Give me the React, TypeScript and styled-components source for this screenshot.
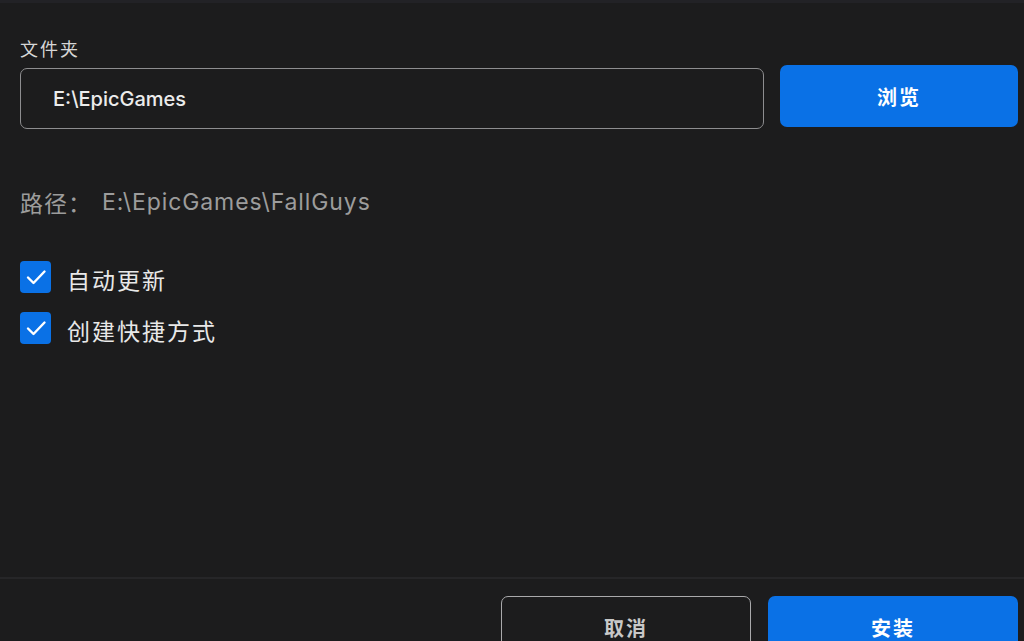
import React from 'react';
import styled, { createGlobalStyle } from 'styled-components';

const GlobalStyle = createGlobalStyle`
  html, body {
    margin: 0;
    padding: 0;
    background: #1c1c1d;
    font-family: Inter, "Noto Sans CJK SC", sans-serif;
  }
`;

const Dialog = styled.div`
  width: 1024px;
  height: 641px;
  display: flex;
  flex-direction: column;
  background: #1c1c1d;
  border-top: 3px solid #222226;
  box-sizing: border-box;
  overflow: hidden;
`;

const Body = styled.div`
  flex: 1;
  min-height: 0;
  padding: 33px 6px 0 20px;
  display: flex;
  flex-direction: column;
`;

const FieldLabel = styled.div`
  font-family: "Noto Sans CJK SC", sans-serif;
  font-size: 18px;
  line-height: 24px;
  letter-spacing: 2px;
  color: #d6d6d6;
  margin-bottom: 8px;
`;

const FolderRow = styled.div`
  display: flex;
  align-items: flex-start;
  gap: 16px;
`;

const PathInput = styled.div`
  flex: 1;
  height: 61px;
  box-sizing: border-box;
  border: 1.5px solid #8d8d8f;
  border-radius: 7px;
  display: flex;
  align-items: center;
  padding-left: 32px;
  font-size: 20px;
  font-weight: 500;
  color: #ececec;
`;

const Button = styled.button<{ $primary?: boolean; $wide?: boolean }>`
  width: ${p => (p.$wide ? '250px' : '238px')};
  height: 62px;
  flex-shrink: 0;
  box-sizing: border-box;
  border-radius: 7px;
  border: ${p => (p.$primary ? 'none' : '1.5px solid #a9a9ab')};
  background: ${p => (p.$primary ? '#0a71e6' : 'transparent')};
  color: ${p => (p.$primary ? '#ffffff' : '#c8c8c8')};
  font-family: "Noto Sans CJK SC", sans-serif;
  font-size: 20px;
  font-weight: 700;
  letter-spacing: 2px;
  padding: 0;
  cursor: pointer;
`;

const BrowseButton = styled(Button)`
  margin-top: -3px;
`;

const PathLine = styled.div`
  margin-top: 58px;
  display: flex;
  align-items: center;
  gap: 10px;
  font-size: 23px;
  line-height: 30px;
  color: #9c9c9c;
  white-space: nowrap;
`;

const PathLabel = styled.span`
  font-family: "Noto Sans CJK SC", sans-serif;
  letter-spacing: 1px;
`;

const PathValue = styled.span`
  letter-spacing: 0.9px;
`;

const Options = styled.div`
  margin-top: 44px;
  display: flex;
  flex-direction: column;
  gap: 19px;
`;

const OptionRow = styled.label`
  height: 32px;
  display: flex;
  align-items: center;
  gap: 16px;
  font-family: "Noto Sans CJK SC", sans-serif;
  font-size: 23px;
  letter-spacing: 2px;
  color: #e8e8e8;
`;

const Box = styled.span`
  width: 31px;
  height: 32px;
  border-radius: 4px;
  background: #0a71e6;
  display: flex;
  align-items: center;
  justify-content: center;
  flex-shrink: 0;
`;

const OptionText = styled.span`
  margin-top: 4px;
`;

const Footer = styled.div`
  flex-shrink: 0;
  height: 64px;
  box-sizing: border-box;
  border-top: 2px solid #262628;
  padding: 17px 6px 0 0;
  display: flex;
  align-items: flex-start;
  justify-content: flex-end;
  gap: 17px;
  overflow: hidden;
`;

const Check = () => (
  <svg width="24" height="24" viewBox="0 0 24 24" fill="none">
    <path d="M4 12.5 L9.5 18 L20.5 6.5" stroke="#ffffff" strokeWidth="2.4" strokeLinecap="round" strokeLinejoin="round" />
  </svg>
);

const Option: React.FC<{ text: string }> = ({ text }) => (
  <OptionRow>
    <Box>
      <Check />
    </Box>
    <OptionText>{text}</OptionText>
  </OptionRow>
);

const App: React.FC = () => {
  return (
    <>
      <GlobalStyle />
      <Dialog>
        <Body>
          <FieldLabel>文件夹</FieldLabel>
          <FolderRow>
            <PathInput>E:\EpicGames</PathInput>
            <BrowseButton $primary>浏览</BrowseButton>
          </FolderRow>
          <PathLine>
            <PathLabel>路径：</PathLabel>
            <PathValue>E:\EpicGames\FallGuys</PathValue>
          </PathLine>
          <Options>
            <Option text="自动更新" />
            <Option text="创建快捷方式" />
          </Options>
        </Body>
        <Footer>
          <Button $wide>取消</Button>
          <Button $wide $primary>安装</Button>
        </Footer>
      </Dialog>
    </>
  );
};

export default App;
